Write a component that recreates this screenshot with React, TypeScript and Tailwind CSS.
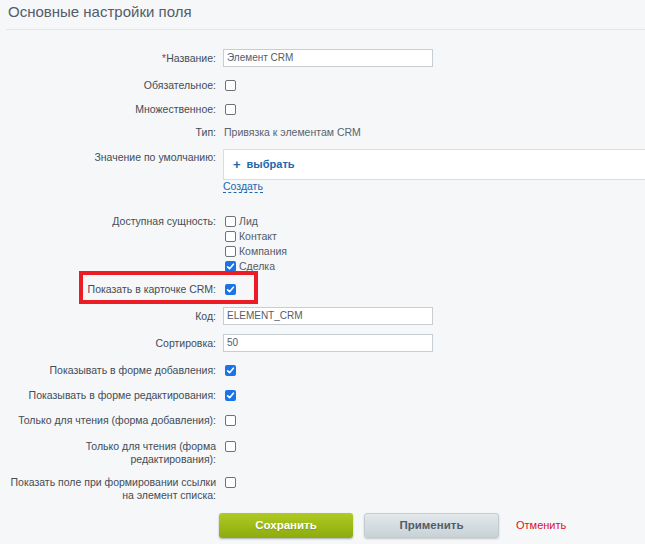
import React from "react";

function Box({ checked = false }: { checked?: boolean }) {
  return checked ? (
    <span className="inline-flex h-[11px] w-[11px] shrink-0 items-center justify-center rounded-[2px] bg-[#1a73e8]">
      <svg width="11" height="11" viewBox="0 0 11 11">
        <path d="M2.6 5.8 L4.6 7.7 L8.4 3.2" fill="none" stroke="#fff" strokeWidth="1.6" strokeLinecap="round" strokeLinejoin="round" />
      </svg>
    </span>
  ) : (
    <span className="inline-block h-[11px] w-[11px] shrink-0 rounded-[2px] border border-[#6f7377] bg-white" />
  );
}

function Label({ children, className = "" }: { children: React.ReactNode; className?: string }) {
  return <div className={`w-[216px] shrink-0 whitespace-nowrap text-right text-[#444c56] ${className}`}>{children}</div>;
}

function CheckRow({ label, checked = false, mt }: { label: string; checked?: boolean; mt: string }) {
  return (
    <div className={`flex h-[14px] items-center leading-[14px] ${mt}`}>
      <Label>{label}</Label>
      <div className="ml-[9px] flex items-center">
        <Box checked={checked} />
      </div>
    </div>
  );
}

function InputRow({ label, value, mt }: { label: string; value: string; mt: string }) {
  return (
    <div className={`flex h-[18px] items-center leading-[18px] ${mt}`}>
      <Label>{label}</Label>
      <div className="ml-[7px] flex h-[18px] w-[210px] items-center border border-[#c6cdd3] bg-white px-[3px] text-[10px] text-[#535c69]">
        {value}
      </div>
    </div>
  );
}

export default function App() {
  return (
    <div className="relative h-[544px] w-[645px] overflow-hidden bg-[#f5f7f9] font-['Liberation_Sans',Arial,sans-serif] text-[10.5px] text-[#535c69]">
      <div className="ml-[6px] h-[30px] border-b border-[#e3e7ea] pl-[2px] pt-[2px]">
        <div className="text-[15px] leading-[20px] text-[#535c69]">Основные настройки поля</div>
      </div>

      <div className="mt-[19px] flex h-[18px] items-center leading-[18px]">
        <Label>
          <span className="text-[#e0221f]">*</span>Название:
        </Label>
        <div className="ml-[7px] flex h-[18px] w-[210px] items-center border border-[#c6cdd3] bg-white px-[3px] text-[10px] text-[#535c69]">
          Элемент CRM
        </div>
      </div>

      <CheckRow label="Обязательное:" mt="mt-[11px]" />
      <CheckRow label="Множественное:" mt="mt-[10px]" />

      <div className="mt-[9px] flex h-[14px] items-center leading-[14px]">
        <Label>Тип:</Label>
        <div className="ml-[8px] text-[#5b636e]">Привязка к элементам CRM</div>
      </div>

      <div className="mt-[10px] flex items-start">
        <Label className="pt-[1px] leading-[14px]">Значение по умолчанию:</Label>
        <div className="ml-[7px] flex flex-col items-start">
          <div className="flex h-[31px] w-[440px] items-center border border-[#d9dee2] bg-white pl-[9px]">
            <span className="text-[13px] font-bold leading-[14px] text-[#2067b0]">+</span>
            <span className="ml-[6px] text-[11px] font-bold text-[#2067b0]">выбрать</span>
          </div>
          <span className="border-b border-dashed border-[#2067b0] text-[10.5px] leading-[12px] text-[#2067b0]">Создать</span>
        </div>
      </div>

      <div className="mt-[21px] flex items-start">
        <Label className="leading-[15px]">Доступная сущность:</Label>
        <div className="ml-[9px] flex flex-col">
          {[
            ["Лид", false],
            ["Контакт", false],
            ["Компания", false],
            ["Сделка", true],
          ].map(([t, c]) => (
            <div key={t as string} className="flex h-[15px] items-center leading-[15px]">
              <Box checked={c as boolean} />
              <span className="ml-[3px]">{t as string}</span>
            </div>
          ))}
        </div>
      </div>

      <div className="relative mt-[8px] flex h-[14px] items-center leading-[14px]">
        <Label>Показать в карточке CRM:</Label>
        <div className="ml-[9px] flex items-center">
          <Box checked />
        </div>
        <div className="absolute left-[79px] top-[-11px] h-[33px] w-[179px] border-[4px] border-[#ec1c24]" />
      </div>

      <InputRow label="Код:" value="ELEMENT_CRM" mt="mt-[11px]" />
      <InputRow label="Сортировка:" value="50" mt="mt-[9px]" />

      <CheckRow label="Показывать в форме добавления:" checked mt="mt-[11px]" />
      <CheckRow label="Показывать в форме редактирования:" checked mt="mt-[11px]" />
      <CheckRow label="Только для чтения (форма добавления):" mt="mt-[11px]" />

      <div className="mt-[13px] flex items-start leading-[13px]">
        <Label>
          Только для чтения (форма
          <br />
          редактирования):
        </Label>
        <div className="ml-[9px] flex h-[13px] items-center">
          <Box />
        </div>
      </div>

      <div className="mt-[10px] flex items-start leading-[13px]">
        <Label>
          Показать поле при формировании ссылки
          <br />
          на элемент списка:
        </Label>
        <div className="ml-[9px] flex h-[13px] items-center">
          <Box />
        </div>
      </div>

      <div className="mt-[11px] flex h-[25px] items-center pl-[219px]">
        <button className="flex h-[25px] w-[134px] items-center justify-center rounded-[3px] bg-[linear-gradient(to_bottom,#b0ca22,#8cab0e)] text-[11.5px] font-bold text-white shadow-[0_1px_2px_rgba(0,0,0,0.3)] [text-shadow:0_1px_1px_rgba(0,0,0,0.15)]">
          Сохранить
        </button>
        <button className="ml-[11px] flex h-[25px] w-[135px] items-center justify-center rounded-[3px] border border-[#c3ccd1] bg-[linear-gradient(to_bottom,#e2e8eb,#c8d2d7)] text-[11.5px] font-bold text-[#535c69] shadow-[0_1px_2px_rgba(0,0,0,0.2)]">
          Применить
        </button>
        <span className="ml-[17px] text-[11px] text-[#d8141b]">Отменить</span>
      </div>
    </div>
  );
}
